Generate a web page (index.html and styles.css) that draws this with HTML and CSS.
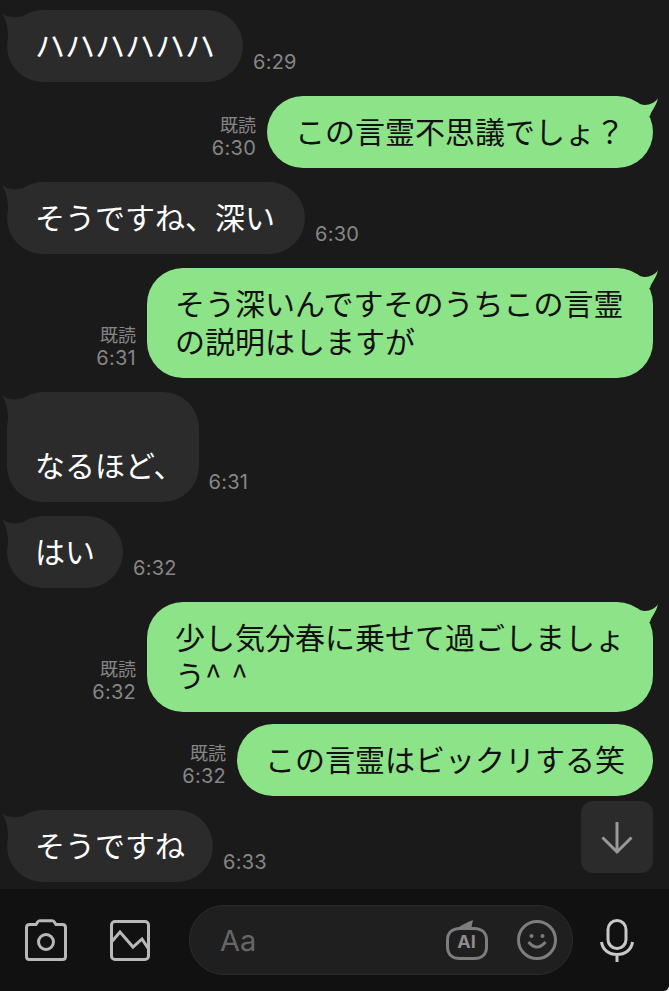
FILE: index.html
```html
<!DOCTYPE html>
<html lang="ja">
<head>
<meta charset="UTF-8">
<meta name="viewport" content="width=device-width, initial-scale=1.0">
<title>トーク</title>
<link rel="stylesheet" href="styles.css">
</head>
<body>
  <main class="chat">
    <div class="row in">
      <div class="bubble"><svg class="tail" viewBox="0 0 24 30"><path d="M2 3C7 7 13 9 22 6V26H8Q8 13 2 3Z"/></svg>ハハハハハハ</div>
      <div class="meta"><span class="time">6:29</span></div>
    </div>
    <div class="row out">
      <div class="meta"><span class="read">既読</span><span class="time">6:30</span></div>
      <div class="bubble"><svg class="tail" viewBox="0 0 24 24"><path d="M23 2C21 6 15 9 10 9C7 9 4 8 2 6V20H15C16 15 21 11 23 2Z"/></svg>この言霊不思議でしょ？</div>
    </div>
    <div class="row in">
      <div class="bubble wide"><svg class="tail" viewBox="0 0 24 30"><path d="M2 3C7 7 13 9 22 6V26H8Q8 13 2 3Z"/></svg>そうですね、深い</div>
      <div class="meta"><span class="time">6:30</span></div>
    </div>
    <div class="row out">
      <div class="meta"><span class="read">既読</span><span class="time">6:31</span></div>
      <div class="bubble"><svg class="tail" viewBox="0 0 24 24"><path d="M23 2C21 6 15 9 10 9C7 9 4 8 2 6V20H15C16 15 21 11 23 2Z"/></svg>そう深いんですそのうちこの言霊の説明はしますが</div>
    </div>
    <div class="row in">
      <div class="bubble trim"><svg class="tail" viewBox="0 0 24 30"><path d="M2 3C7 7 13 9 22 6V26H8Q8 13 2 3Z"/></svg><br>なるほど、</div>
      <div class="meta"><span class="time">6:31</span></div>
    </div>
    <div class="row in">
      <div class="bubble"><svg class="tail" viewBox="0 0 24 30"><path d="M2 3C7 7 13 9 22 6V26H8Q8 13 2 3Z"/></svg>はい</div>
      <div class="meta"><span class="time">6:32</span></div>
    </div>
    <div class="row out">
      <div class="meta"><span class="read">既読</span><span class="time">6:32</span></div>
      <div class="bubble"><svg class="tail" viewBox="0 0 24 24"><path d="M23 2C21 6 15 9 10 9C7 9 4 8 2 6V20H15C16 15 21 11 23 2Z"/></svg>少し気分春に乗せて過ごしましょう^ ^</div>
    </div>
    <div class="row out next">
      <div class="meta"><span class="read">既読</span><span class="time">6:32</span></div>
      <div class="bubble">この言霊はビックリする笑</div>
    </div>
    <div class="row in">
      <div class="bubble"><svg class="tail" viewBox="0 0 24 30"><path d="M2 3C7 7 13 9 22 6V26H8Q8 13 2 3Z"/></svg>そうですね</div>
      <div class="meta"><span class="time">6:33</span></div>
    </div>
  </main>

  <button class="scroll-down" type="button" aria-label="Scroll to latest">
    <svg viewBox="0 0 36 36" width="36" height="36"><path d="M18 3V33M3.5 18.5 18 33 32.5 18.5"/></svg>
  </button>

  <footer class="composer">
    <svg class="icon camera" viewBox="0 0 42 42" width="42" height="42">
      <path d="M4.5 5.5H11L13 2.5Q13.5 1.7 15 1.7H27Q28.5 1.7 29 2.5L31 5.5H37.5Q40.5 5.5 40.5 8.5V37.5Q40.5 40.5 37.5 40.5H4.5Q1.5 40.5 1.5 37.5V8.5Q1.5 5.5 4.5 5.5Z"/>
      <circle cx="21" cy="23" r="7.5"/>
    </svg>
    <svg class="icon picture" viewBox="0 0 40 41" width="40" height="41">
      <rect x="1.5" y="1.5" width="37" height="38" rx="3.5"/>
      <path d="M1.5 22 10 12 23 27 32 19 38.5 29"/>
    </svg>
    <div class="input">
      <span class="placeholder">Aa</span>
      <svg class="icon ai" viewBox="0 0 42 40" width="42" height="40">
        <path d="M14 8.500H28C36 8.500 40.500 13 40.500 20V27C40.500 34 36 38.500 28 38.500H14C6 38.500 1.500 34 1.500 27V20C1.500 13 6 8.500 14 8.500Z"/>
        <path class="wedge" d="M10 9.500C15 5 20 3 27 0L25 9.500Z"/>
        <text x="20.500" y="28" text-anchor="middle">AI</text>
      </svg>
      <svg class="icon smile" viewBox="0 0 40 40" width="40" height="40">
        <circle cx="20" cy="20" r="18.500"/>
        <circle class="eye" cx="14.500" cy="16" r="2"/>
        <circle class="eye" cx="25.500" cy="16" r="2"/>
        <path d="M11.500 22Q20 32 28.500 22"/>
      </svg>
    </div>
    <svg class="icon mic" viewBox="0 0 34 43" width="34" height="43">
      <rect x="8" y="1.500" width="18" height="28" rx="9"/>
      <path d="M1.500 23C2.500 31 9 35.500 17 35.500S31.500 31 32.500 23M17 35.500V43"/>
    </svg>
  </footer>
</body>
</html>
```
FILE: styles.css
```css
* {
  box-sizing: border-box;
}

html {
  height: 991px;
  background-color: #ddd;
}

body {
  position: relative;
  display: flex;
  flex-direction: column;
  height: 991px;
  margin: 0;
  overflow: hidden;
  border-bottom-right-radius: 6px;
  font-family: "Noto Sans CJK JP", "Noto Sans", sans-serif;
  background-color: #1a1a1a;
}

.chat {
  flex: 1;
  display: flex;
  flex-direction: column;
  gap: 14px;
  padding: 10px 16px 0 7px;
}

.row {
  display: flex;
  gap: 10px;
}

.row.out {
  justify-content: flex-end;
  gap: 11px;
}

.row.next {
  margin-top: -2px;
}

.bubble {
  position: relative;
  max-width: 506px;
  padding: 15px 28px 19px;
  border-radius: 36px;
  font-size: 30px;
  line-height: 38px;
  word-spacing: 3px;
  background-color: #2b2b2b;
  color: #fff;
}

.bubble.wide {
  padding-right: 30px;
}

/* the trailing comma hangs in the original */
.bubble.trim {
  padding-right: 15px;
}

.out .bubble {
  background-color: #8de388;
  color: #111;
}

.tail {
  position: absolute;
  top: 0;
  left: -7px;
  width: 24px;
  height: 30px;
  fill: #2b2b2b;
}

.out .tail {
  left: auto;
  right: -6px;
  height: 24px;
  fill: #8de388;
}

.meta {
  display: flex;
  flex-direction: column;
  align-items: flex-end;
  align-self: flex-end;
  margin-bottom: 8px;
  line-height: 24px;
  color: #868686;
}

.time {
  font-family: Inter, sans-serif;
  font-size: 20px;
  letter-spacing: 0.25px;
}

.read {
  font-size: 18px;
}

.scroll-down {
  position: absolute;
  right: 16px;
  bottom: 118px;
  display: flex;
  align-items: center;
  justify-content: center;
  width: 72px;
  height: 72px;
  padding: 0;
  border: none;
  border-radius: 12px;
  background-color: #2b2b2b;
}

.scroll-down svg {
  fill: none;
  stroke: #999;
  stroke-width: 3;
}

.composer {
  display: flex;
  align-items: center;
  height: 102px;
  padding-left: 25px;
  background-color: #111;
}

.icon {
  flex: none;
  fill: none;
  stroke-width: 3;
}

.camera, .picture {
  stroke: #b8b8b8;
}

.picture {
  margin-left: 43px;
}

.input {
  display: flex;
  align-items: center;
  width: 384px;
  height: 70px;
  margin-left: 39px;
  padding: 0 15px 0 30px;
  border: 1px solid #2c2c2c;
  border-radius: 35px;
  background-color: #1f1f1f;
}

.placeholder {
  flex: 1;
  font-family: Inter, sans-serif;
  font-size: 29px;
  color: #666;
}

.ai, .smile {
  stroke: #7d7d7d;
}

.ai .wedge {
  fill: #7d7d7d;
  stroke: none;
}

.ai text {
  font-family: Inter, sans-serif;
  font-size: 18px;
  font-weight: 700;
  fill: #8d8d8d;
  stroke: none;
}

.eye {
  fill: #7d7d7d;
  stroke: none;
}

.smile {
  margin-left: 29px;
}

.mic {
  margin-left: 27px;
  stroke: #c8c8c8;
}
```
